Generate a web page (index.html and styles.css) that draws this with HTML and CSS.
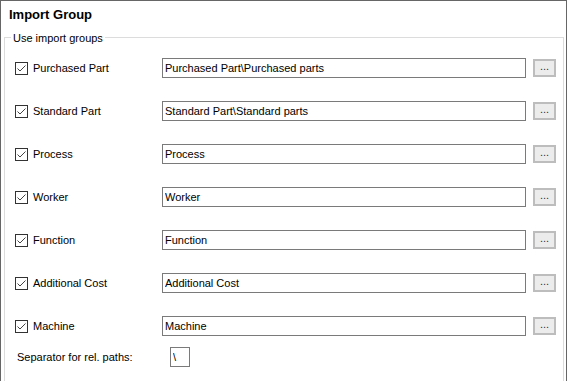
FILE: index.html
```html
<!DOCTYPE html>
<html lang="en">
<head>
  <meta charset="UTF-8">
  <meta name="viewport" content="width=device-width, initial-scale=1.0">
  <title>Import Group</title>
  <link rel="stylesheet" href="styles.css">
</head>
<body>

<div class="panel">
  <h2 class="title">Import Group</h2>

  <fieldset class="group">
    <legend>Use import groups</legend>

    <div class="rows">
      <div class="row">
        <label class="check"><span class="box"><svg width="11" height="11" viewBox="0 0 11 11"><path d="M1.5 5.5 L4 8 L9.5 2.5" /></svg></span>Purchased Part</label>
        <input class="path" type="text" value="Purchased Part\Purchased parts">
        <button class="browse">...</button>
      </div>
      <div class="row">
        <label class="check"><span class="box"><svg width="11" height="11" viewBox="0 0 11 11"><path d="M1.5 5.5 L4 8 L9.5 2.5" /></svg></span>Standard Part</label>
        <input class="path" type="text" value="Standard Part\Standard parts">
        <button class="browse">...</button>
      </div>
      <div class="row">
        <label class="check"><span class="box"><svg width="11" height="11" viewBox="0 0 11 11"><path d="M1.5 5.5 L4 8 L9.5 2.5" /></svg></span>Process</label>
        <input class="path" type="text" value="Process">
        <button class="browse">...</button>
      </div>
      <div class="row">
        <label class="check"><span class="box"><svg width="11" height="11" viewBox="0 0 11 11"><path d="M1.5 5.5 L4 8 L9.5 2.5" /></svg></span>Worker</label>
        <input class="path" type="text" value="Worker">
        <button class="browse">...</button>
      </div>
      <div class="row">
        <label class="check"><span class="box"><svg width="11" height="11" viewBox="0 0 11 11"><path d="M1.5 5.5 L4 8 L9.5 2.5" /></svg></span>Function</label>
        <input class="path" type="text" value="Function">
        <button class="browse">...</button>
      </div>
      <div class="row">
        <label class="check"><span class="box"><svg width="11" height="11" viewBox="0 0 11 11"><path d="M1.5 5.5 L4 8 L9.5 2.5" /></svg></span>Additional Cost</label>
        <input class="path" type="text" value="Additional Cost">
        <button class="browse">...</button>
      </div>
      <div class="row">
        <label class="check"><span class="box"><svg width="11" height="11" viewBox="0 0 11 11"><path d="M1.5 5.5 L4 8 L9.5 2.5" /></svg></span>Machine</label>
        <input class="path" type="text" value="Machine">
        <button class="browse">...</button>
      </div>
    </div>

    <div class="sep-row">
      <label class="sep-label" for="sep">Separator for rel. paths:</label>
      <input class="sep" id="sep" type="text" value="\">
    </div>
  </fieldset>
</div>

</body>
</html>
```

FILE: styles.css
```css
html, body {
  margin: 0;
  overflow: hidden;
  background-color: white;
}
body {
  font-family: "Liberation Sans", Arial, sans-serif;
  font-size: 11px;
  color: #000;
}
.panel {
  width: 567px;
  height: 381px;
  overflow: hidden;
  box-sizing: border-box;
  border: 1px solid #666;
  border-bottom: none;
  padding-top: 5px;
}
.title {
  margin: 0 0 0 8px;
  font-size: 13px;
  line-height: 17px;
  font-weight: bold;
}
.group {
  margin: 5px 2px 0 3px;
  padding: 12px 0 40px 0;
  border: 1px solid #dcdcdc;
}
.group legend {
  margin-left: 6px;
  padding: 4px 2px 1px 2px;
  line-height: 13px;
}
.rows {
  display: flex;
  flex-direction: column;
  gap: 23px;
}
.row {
  display: flex;
  align-items: center;
  height: 20px;
  padding-left: 10px;
}
.check {
  display: flex;
  align-items: center;
  width: 147px;
}
.box {
  width: 11px;
  height: 11px;
  border: 1px solid #333;
  margin-right: 5px;
  background-color: white;
}
.box svg {
  display: block;
}
.box path {
  fill: none;
  stroke: #444;
  stroke-width: 1;
}
.path {
  width: 364px;
  height: 20px;
  box-sizing: border-box;
  border: 1px solid #7a7a7a;
  padding: 0 2px;
  margin: 0;
  font-family: inherit;
  font-size: 11px;
  color: #000;
  outline: none;
}
.browse {
  width: 23px;
  height: 18px;
  margin-left: 7px;
  padding: 0 0 3px 0;
  border: 2px solid #bdbdbd;
  background-color: #ececec;
  font-family: inherit;
  font-size: 11px;
  line-height: 11px;
  color: #333;
}
.sep-row {
  display: flex;
  align-items: center;
  margin-top: 11px;
  padding-left: 12px;
}
.sep-label {
  width: 153px;
}
.sep {
  width: 20px;
  height: 20px;
  box-sizing: border-box;
  border: 1px solid #7a7a7a;
  padding: 0 2px;
  margin: 0;
  font-family: inherit;
  font-size: 11px;
  outline: none;
}
```
